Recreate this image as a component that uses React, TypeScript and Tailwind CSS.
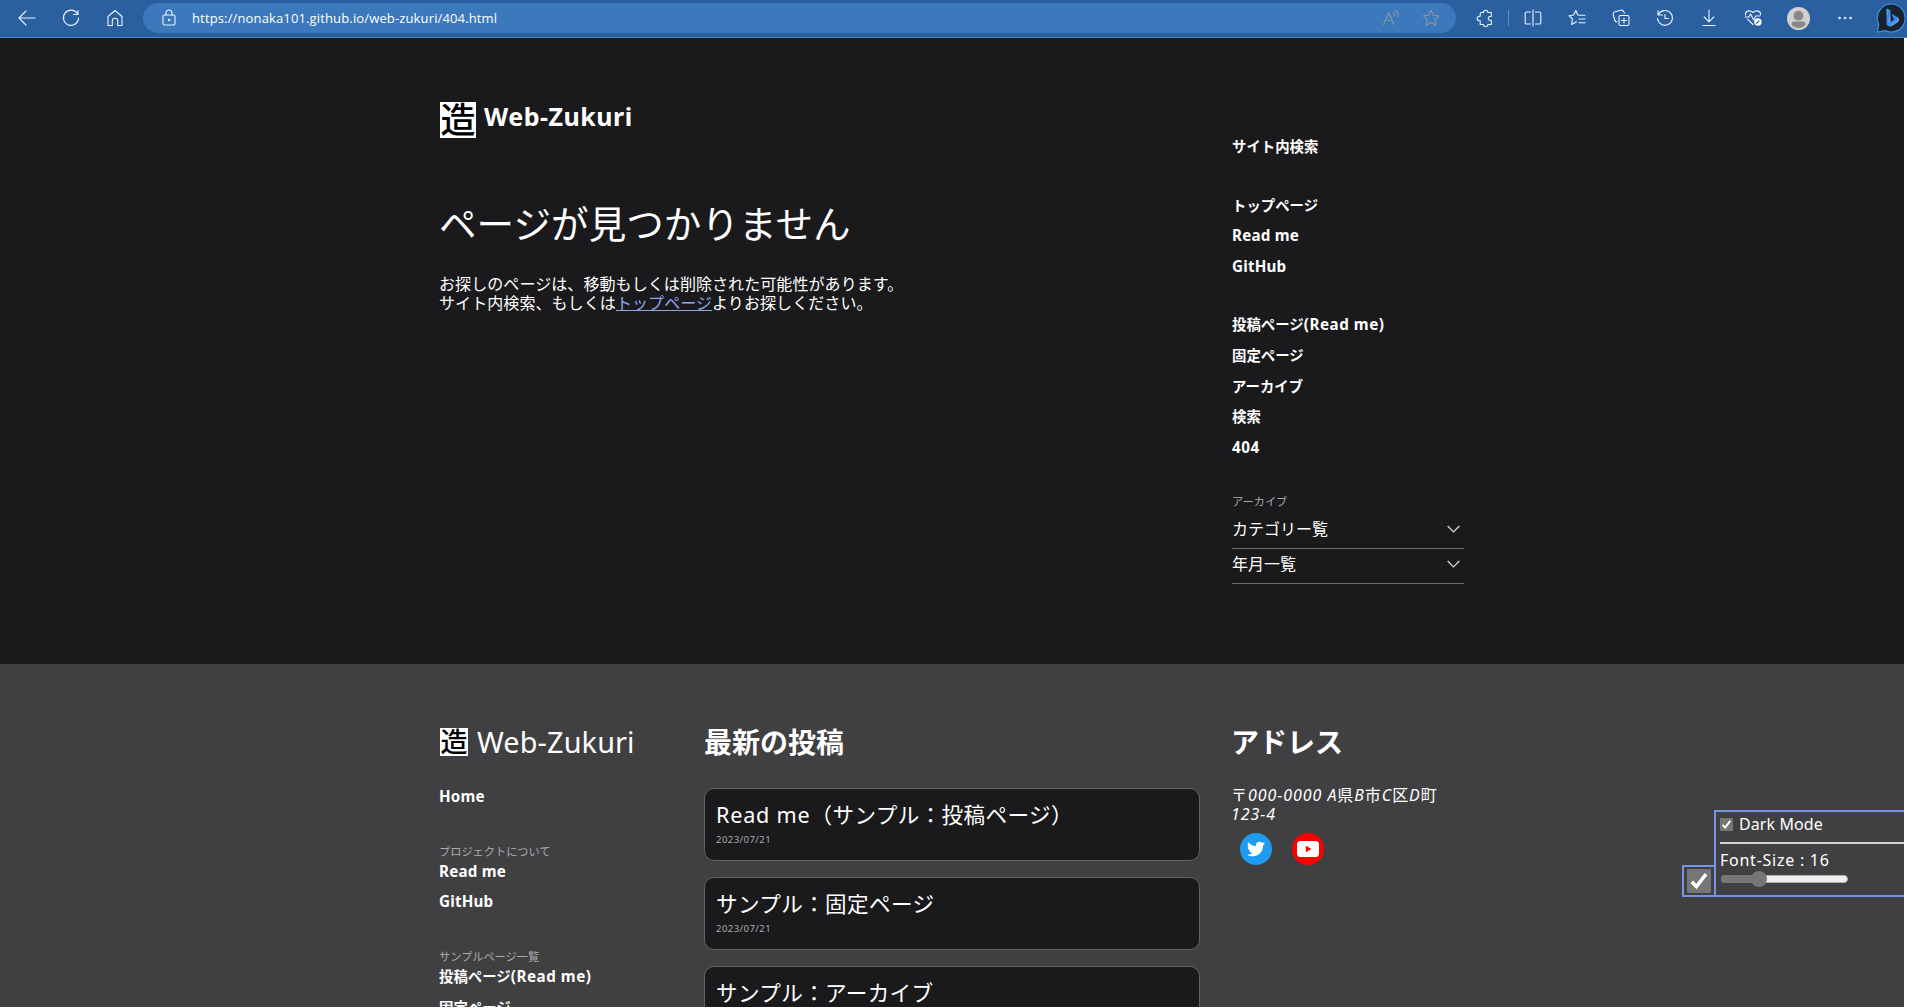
import type { ReactNode } from 'react';
import { FaTwitter } from 'react-icons/fa';

function Glyph({ children, size = 18, className = '' }: { children: ReactNode; size?: number; className?: string }) {
  return (
    <svg width={size} height={size} viewBox="0 0 18 18" fill="none" stroke="currentColor" strokeWidth="1.1" strokeLinecap="round" strokeLinejoin="round" className={`shrink-0 ${className}`}>
      {children}
    </svg>
  );
}

const star = 'M9 1.2l2.400 5 5.400.7-4 3.800 1 5.500L9 13.600l-4.800 2.600 1-5.500-4-3.800 5.400-.7z';

function BrowserBar() {
  return (
    <header className="flex h-[38px] shrink-0 items-center border-b border-[#4c88bf] bg-[#2b60a0] pb-px font-['Open_Sans',sans-serif] text-[#e8f4ff]">
      <Glyph className="ml-[18px]"><path d="M17 9H1M8 2L1 9l7 7" /></Glyph>
      <Glyph className="ml-[26px]"><path d="M15.300 4.500A7.600 7.600 0 1 0 16.600 9M16 1.500V5.500h-4.500" /></Glyph>
      <Glyph className="ml-[26px]"><path d="M2 7.500L9 1.500l7 6v9h-4.300v-4.500a2.700 2.700 0 0 0-5.400 0v4.500H2z" /></Glyph>
      <div className="ml-[19px] flex h-[30px] w-[1313px] items-center rounded-full bg-[#3b78bc]">
        <Glyph className="ml-[17px]"><rect x="3" y="6" width="12" height="10" rx="1.500" /><path d="M6 6V4a3 3 0 0 1 6 0v2" /><circle cx="9" cy="11" r=".7" fill="currentColor" /></Glyph>
        <span className="ml-[14px] w-[1190px] text-[13px] leading-[18px] tracking-[0.14px] text-white">https://nonaka101.github.io/web-zukuri/404.html</span>
        <Glyph className="text-[#8c979f]"><path d="M1.500 15.500L6.700 3.500l5.200 12M3.500 11.200h6.400M11 3.500c1.500.8 2 2 1.700 3.700M13 1.500c2.700 1.500 3.500 3.500 2.800 6" /></Glyph>
        <Glyph className="ml-[22px] text-[#8c979f]"><path d={star} /></Glyph>
      </div>
      <Glyph className="ml-5"><path d="M5.500 3.500h2a2.200 2.200 0 0 1 4.400 0h3.400v4h-1.200a1.900 1.900 0 0 0 0 3.800h1.200v4.200h-3.400a2.200 2.200 0 0 1-4.400 0H4.200v-3.800h-.8a2.200 2.200 0 0 1 0-4.400h.8V4.800a1.300 1.300 0 0 1 1.300-1.300z" /></Glyph>
      <div className="ml-[14px] h-4 w-px bg-[#5f92c8]" />
      <Glyph className="ml-[15px]"><path d="M9 1v16M6.500 3H2.500A1.300 1.300 0 0 0 1.200 4.300v9.400A1.300 1.300 0 0 0 2.500 15h4M11.500 3h4a1.300 1.300 0 0 1 1.300 1.300v9.400a1.300 1.300 0 0 1-1.300 1.300h-4" /></Glyph>
      <Glyph className="ml-[26px]"><path d="M11 6.300h6M11 10h6M11 13.700h6M12 6.300L9.900 6 7.800 1.500 5.600 6 1 6.700l3.400 3.300-.8 5.500 4.900-2.700" /></Glyph>
      <Glyph className="ml-[26px]"><rect x="7" y="6.500" width="10" height="10" rx="1.500" /><path d="M12 9v5M9.500 11.500h5M5 13c-1.500-.2-2-.8-2.300-2L1.200 5.500C1 4 1.500 3.200 2.800 2.800L9 1.200c1.500-.3 2.300.2 2.800 1.500l.5 1.500" /></Glyph>
      <Glyph className="ml-[26px]"><path d="M2 1.500v4.500h4.500M2.300 5.700A7.400 7.400 0 1 1 1.600 9.500M9 5.500v4h3.200" /></Glyph>
      <Glyph className="ml-[26px]"><path d="M9 1v11.500M4.200 8L9 12.800l4.800-4.800M3 16.500h12" /></Glyph>
      <Glyph className="ml-[26px]"><path d="M9 15.500L3.500 10.200M1.500 6C.8 2 5.500.500 9 3.500 12.500.500 17.200 2 16.500 6M1 8h4l1.500-3 3.200 6L11.700 7h4" /><circle cx="13.900" cy="13" r="3.700" fill="white" stroke="none" /><path d="M12.600 14.300l2.500-2.500" stroke="#2b60a0" /></Glyph>
      <svg width="23" height="23" viewBox="0 0 23 23" className="ml-[25px] shrink-0"><circle cx="11.500" cy="11.500" r="11.500" fill="#d2d0ce" /><circle cx="11.500" cy="8.700" r="4.900" fill="#8a8886" /><path d="M4.500 17.500c0-2 1-3 3-3h8c2 0 3 1 3 3-1.500 2.300-4 3.500-7 3.500s-5.500-1.200-7-3.500z" fill="#8a8886" /></svg>
      <Glyph className="ml-[26px]"><g fill="currentColor" strokeWidth=".4"><circle cx="3.500" cy="9" r="1.100" /><circle cx="9" cy="9" r="1.100" /><circle cx="14.500" cy="9" r="1.100" /></g></Glyph>
      <svg width="30" height="32" viewBox="0 0 30 32" className="ml-[22px] shrink-0">
        <defs><linearGradient id="bing" x1="0" y1="0" x2="0.800" y2="1"><stop offset="0" stopColor="#2fc3f5" /><stop offset=".55" stopColor="#3f7df0" /><stop offset="1" stopColor="#58d5e8" /></linearGradient></defs>
        <path d="M15 2a14 14 0 1 1-6 26.600L1.500 30l1.200-8A14 14 0 0 1 15 2z" fill="#1b222c" stroke="#3494df" strokeWidth="1.200" />
        <path d="M10.500 6.500l4 1.800v12l-4 2.700z" fill="url(#bing)" /><path d="M15.800 12l6 3.200c2 1.200 1.600 3.800-.2 5l-5.300 3.600c-2.500 1.500-5.300.3-5.700-1.800l7.400-4z" fill="url(#bing)" />
      </svg>
    </header>
  );
}

function LogoMark({ large = false }: { large?: boolean }) {
  return (
    <span className={`flex shrink-0 items-center justify-center bg-white font-medium text-black ${large ? 'h-9 w-9 text-[35px] leading-[36px]' : 'h-7 w-7 text-[27px] leading-[28px]'}`}>造</span>
  );
}

const Latin = ({ children }: { children: ReactNode }) => <span className="text-[15.200px] tracking-[0.200px]">{children}</span>;
const WideLatin = ({ children }: { children: ReactNode }) => <span className="text-[15.200px] tracking-[0.560px]">{children}</span>;

function NavItem({ children }: { children: ReactNode }) {
  return <li className="h-[30.700px] text-[14.400px] font-bold leading-[17px]">{children}</li>;
}

function Summary({ children }: { children: ReactNode }) {
  return (
    <div className="flex h-[35.500px] items-center justify-between border-b border-[#6b6b6d] pb-[3px] pr-1 text-base">
      <span>{children}</span>
      <svg width="13" height="8" viewBox="0 0 13 8" fill="none" stroke="#ddd" strokeWidth="1.200"><path d="M.700 1l5.800 5.800L12.300 1" /></svg>
    </div>
  );
}

function Card({ children }: { children: ReactNode }) {
  return (
    <article className="h-[73px] shrink-0 rounded-[10px] border border-[#626264] bg-[#1a1a1c] px-[11px] pt-[13px]">
      <h3 className="text-[21.600px] leading-[26px] tracking-[0.350px]">{children}</h3>
      <p className="mt-[6px] text-[9.600px] leading-3 text-[#aaaaac]"><span className="tracking-[0.400px]">2023/07/21</span></p>
    </article>
  );
}

function Check({ large = false }: { large?: boolean }) {
  return (
    <svg width={large ? 24 : 13} height={large ? 24 : 13} viewBox="0 0 13 13" className="shrink-0"><rect width="13" height="13" rx=".8" fill="#767676" /><path d="M2.600 6.900l2.500 2.600 5.200-6.700" fill="none" stroke="white" strokeWidth="1.900" /></svg>
  );
}

function Settings() {
  return (
    <aside className="absolute right-0 top-[772px] flex items-end">
      <div className="-mr-0.5 flex h-8 w-[34px] items-center justify-center border-2 border-[#7494e4]"><Check large /></div>
      <div className="h-[87px] w-[190px] border-2 border-r-0 border-[#7494e4] pl-1 text-base">
        <label className="flex h-[25px] items-center gap-[6px] leading-[25px]"><Check /><span className="tracking-[0.100px]">Dark Mode</span></label>
        <hr className="mt-[5px] border-t-2 border-[#d5d5d5]" />
        <div className="mt-[6px] leading-5 tracking-[0.750px]">Font-Size : 16</div>
        <div className="relative ml-px mt-[5px] h-2 w-[127px] rounded-full border border-[#b2b2b2] bg-[#efefef]">
          <div className="absolute -left-px -top-px h-2 w-[38px] rounded-full bg-[#767676]" />
          <div className="absolute -top-[5px] left-[29px] h-4 w-4 rounded-full bg-[#767676]" />
        </div>
      </div>
    </aside>
  );
}

export default function App() {
  return (
    <div className="flex h-[1008px] w-[1907px] flex-col overflow-hidden bg-white">
      <BrowserBar />
      <div className="relative flex h-[969px] w-[1904px] flex-col overflow-hidden bg-[#404042] font-['Noto_Sans','Noto_Sans_CJK_JP',sans-serif] text-white" lang="ja">
        <div className="flex h-[626px] shrink-0 bg-[#1a1a1c] pl-[439px]">
          <main className="w-[792px] pt-16">
            <div className="flex h-9 items-start gap-2 pl-px">
              <LogoMark large />
              <span className="text-[25px] font-bold leading-[29px] tracking-[0.530px]">Web-Zukuri</span>
            </div>
            <h1 className="mt-[63px] text-[37.500px] leading-[45px] tracking-[0.100px]">ページが見つかりません</h1>
            <p className="mt-[29px] text-base leading-[19.200px] tracking-[0.080px]">お探しのページは、移動もしくは削除された可能性があります。<br />サイト内検索、もしくは<a className="text-[#8ea6ee] underline">トップページ</a>よりお探しください。</p>
          </main>
          <nav className="w-[233px] pl-px pt-[100px]">
            <ul><NavItem>サイト内検索</NavItem></ul>
            <ul className="mt-7"><NavItem>トップページ</NavItem><NavItem><Latin>Read me</Latin></NavItem><NavItem><Latin>GitHub</Latin></NavItem></ul>
            <ul className="mt-[27.500px]"><NavItem>投稿ページ<WideLatin>(Read me)</WideLatin></NavItem><NavItem>固定ページ</NavItem><NavItem>アーカイブ</NavItem><NavItem>検索</NavItem><NavItem><WideLatin>404</WideLatin></NavItem></ul>
            <p className="mt-[25.500px] text-[11.200px] leading-[14px] text-[#aaaaac]">アーカイブ</p>
            <div className="mt-[4px]"><Summary>カテゴリー覧</Summary><Summary>年月一覧</Summary></div>
          </nav>
        </div>
        <footer className="flex pl-[439px] pt-16">
          <section className="w-[265px]">
            <div className="flex h-7 items-center gap-[9px] pl-px"><LogoMark /><span className="text-[28.800px] leading-[30px] tracking-[0.150px]">Web-Zukuri</span></div>
            <ul className="mt-[32px]"><NavItem><Latin>Home</Latin></NavItem></ul>
            <p className="mt-[26px] text-[11.200px] leading-[14px] text-[#aaaaac]">プロジェクトについて</p>
            <ul className="mt-1"><NavItem><Latin>Read me</Latin></NavItem><NavItem><Latin>GitHub</Latin></NavItem></ul>
            <p className="mt-[26px] text-[11.200px] leading-[14px] text-[#aaaaac]">サンプルページ一覧</p>
            <ul className="mt-1"><NavItem>投稿ページ<WideLatin>(Read me)</WideLatin></NavItem><NavItem>固定ページ</NavItem></ul>
          </section>
          <section className="w-[496px]">
            <h2 className="h-[60px] text-[28px] font-bold leading-[29px]">最新の投稿</h2>
            <div className="flex flex-col gap-4"><Card><span className="tracking-[0.800px]">Read me</span>（サンプル：投稿ページ）</Card><Card>サンプル：固定ページ</Card><Card>サンプル：アーカイブ</Card></div>
          </section>
          <section className="ml-[31px] w-[233px]">
            <h2 className="h-[58px] text-[28px] font-bold leading-[29px]">アドレス</h2>
            <address className="whitespace-nowrap text-base italic leading-[19.200px] tracking-[0.950px]"><span className="not-italic">〒</span>000-0000 A<span className="not-italic">県</span>B<span className="not-italic">市</span>C<span className="not-italic">区</span>D<span className="not-italic">町</span><br />123-4</address>
            <div className="mt-[9px] flex gap-5 pl-[9px]">
              <span className="flex h-8 w-8 items-center justify-center rounded-full bg-[#1d9bf0]"><FaTwitter size={18} /></span>
              <span className="flex h-8 w-8 items-center justify-center rounded-full bg-[#f00]"><svg width="22" height="16" viewBox="0 0 22 16"><rect width="22" height="16" rx="3.500" fill="white" /><path d="M8.800 4.700v6.600l5.700-3.300z" fill="#f00" /></svg></span>
            </div>
          </section>
        </footer>
        <Settings />
      </div>
    </div>
  );
}
